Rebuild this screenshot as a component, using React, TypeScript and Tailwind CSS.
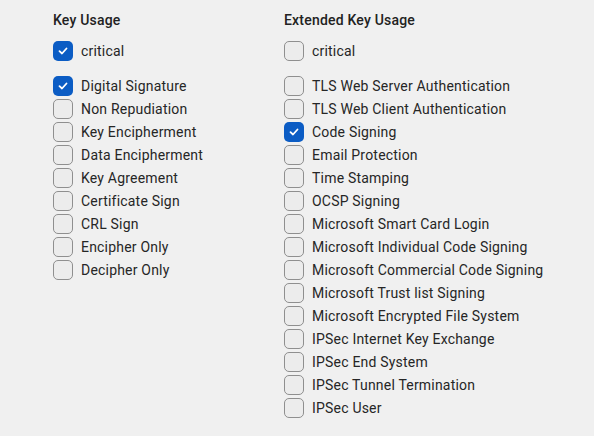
import React from 'react';

const KEY_USAGE: [string, boolean][] = [
  ["Digital Signature", true],
  ["Non Repudiation", false],
  ["Key Encipherment", false],
  ["Data Encipherment", false],
  ["Key Agreement", false],
  ["Certificate Sign", false],
  ["CRL Sign", false],
  ["Encipher Only", false],
  ["Decipher Only", false],
];

const EXT_KEY_USAGE: [string, boolean][] = [
  ["TLS Web Server Authentication", false],
  ["TLS Web Client Authentication", false],
  ["Code Signing", true],
  ["Email Protection", false],
  ["Time Stamping", false],
  ["OCSP Signing", false],
  ["Microsoft Smart Card Login", false],
  ["Microsoft Individual Code Signing", false],
  ["Microsoft Commercial Code Signing", false],
  ["Microsoft Trust list Signing", false],
  ["Microsoft Encrypted File System", false],
  ["IPSec Internet Key Exchange", false],
  ["IPSec End System", false],
  ["IPSec Tunnel Termination", false],
  ["IPSec User", false],
];

const Check: React.FC<{ label: string; checked: boolean }> = ({ label, checked }) => (
  <label className="flex items-center gap-2 h-5">
    {checked ? (
      <span className="w-5 h-5 rounded-[5px] bg-[#0b5cc4] flex items-center justify-center">
        <svg width="12" height="12" viewBox="0 0 12 12" fill="none">
          <path d="M2.5 6.2 L5 8.5 L9.5 3.5" stroke="white" strokeWidth="1.8" strokeLinecap="round" strokeLinejoin="round" />
        </svg>
      </span>
    ) : (
      <span className="w-5 h-5 rounded-[5px] border border-[#8f8f8f] bg-[#ececec]" />
    )}
    <span className="text-[14px] text-[#262626] leading-5 tracking-[0.2px]">{label}</span>
  </label>
);

const Group: React.FC<{ title: string; items: [string, boolean][]; critical: boolean; width: string }> = ({ title, items, critical, width }) => (
  <div className={`flex flex-col ${width}`}>
    <div className="text-[14px] font-medium text-[#222] leading-5 tracking-[0.2px] mb-[11px]">{title}</div>
    <Check label="critical" checked={critical} />
    <div className="flex flex-col gap-[3px] mt-[15px]">
      {items.map(([l, c]) => (
        <Check key={l} label={l} checked={c} />
      ))}
    </div>
  </div>
);

export default function App() {
  return (
    <div className="w-[594px] h-[436px] bg-[#f0f0f0] flex pl-[53px] pt-[10px]" style={{ fontFamily: 'Roboto, "Noto Sans", sans-serif' }}>
      <Group title="Key Usage" items={KEY_USAGE} critical={true} width="w-[231px]" />
      <Group title="Extended Key Usage" items={EXT_KEY_USAGE} critical={false} width="w-[280px]" />
    </div>
  );
}
